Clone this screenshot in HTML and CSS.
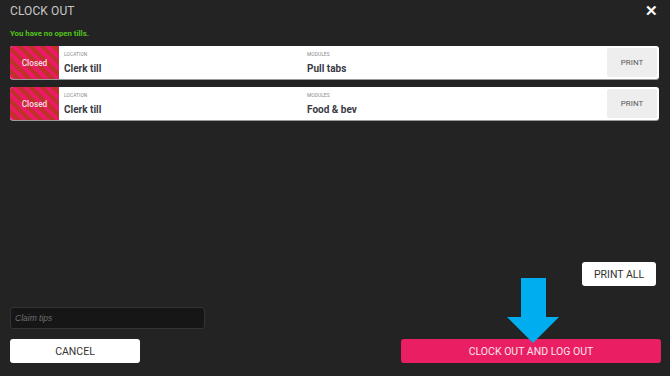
FILE: index.html
```html
<!DOCTYPE html>
<html>
<head>
<meta charset="utf-8">
<link rel="stylesheet" href="styles.css">
</head>
<body>
<div class="screen">
  <div class="header">
    <span class="title">CLOCK OUT</span>
    <span class="close">✕</span>
  </div>
  <div class="notice">You have no open tills.</div>
  <div class="tills">
    <div class="till">
      <div class="status">Closed</div>
      <div class="field loc">
        <div class="label">LOCATION</div>
        <div class="value">Clerk till</div>
      </div>
      <div class="field mod">
        <div class="label">MODULES</div>
        <div class="value">Pull tabs</div>
      </div>
      <button class="print">PRINT</button>
    </div>
    <div class="till">
      <div class="status">Closed</div>
      <div class="field loc">
        <div class="label">LOCATION</div>
        <div class="value">Clerk till</div>
      </div>
      <div class="field mod">
        <div class="label">MODULES</div>
        <div class="value">Food &amp; bev</div>
      </div>
      <button class="print">PRINT</button>
    </div>
  </div>
  <div class="bottom">
    <div class="printall-row"><button class="printall">PRINT ALL</button></div>
    <input class="tips" type="text" placeholder="Claim tips">
    <div class="actions">
      <button class="cancel">CANCEL</button>
      <button class="logout">CLOCK OUT AND LOG OUT</button>
    </div>
  </div>
  <svg class="arrow" width="52" height="65" viewBox="0 0 52 65">
    <rect x="14" y="0" width="25" height="40" fill="#00aeef"/>
    <polygon points="0,39 52,39 26,65" fill="#00aeef"/>
  </svg>
</div>
</body>
</html>
```

FILE: styles.css
```css
html, body {
  margin: 0;
  padding: 0;
  background: #232323;
  font-family: Roboto, "Liberation Sans", sans-serif;
}

.screen {
  position: relative;
  height: 376px;
  box-sizing: border-box;
  padding: 0 11px 13px 10px;
  display: flex;
  flex-direction: column;
}

.header {
  height: 22px;
  display: flex;
  align-items: center;
  justify-content: space-between;
}

.title {
  color: #c8c8c8;
  font-size: 12px;
  letter-spacing: 0.1px;
}

.close {
  color: #fff;
  font-size: 15px;
  font-weight: 700;
  margin-right: 1px;
  line-height: 1;
}

.notice {
  margin-top: 7px;
  line-height: 10px;
  font-size: 7.8px;
  font-weight: 700;
  color: #52c41a;
}

.tills {
  margin-top: 7px;
  display: flex;
  flex-direction: column;
  gap: 8px;
}

.till {
  height: 33px;
  background: #fff;
  border-radius: 3px;
  display: flex;
  align-items: stretch;
  overflow: hidden;
  box-shadow: 0 1px 0 #9a9a9a;
}

.status {
  width: 49px;
  flex: none;
  display: flex;
  align-items: center;
  justify-content: center;
  color: #f8dde3;
  font-size: 8.3px;
  font-weight: 500;
  background: repeating-linear-gradient(45deg, #ec1a66 0 4px, #bd3327 4px 8px);
}

.field {
  display: flex;
  flex-direction: column;
  padding-top: 6px;
  box-sizing: border-box;
}

.loc {
  width: 248px;
  padding-left: 5px;
}

.mod {
  flex: 1;
}

.label {
  font-size: 4.8px;
  color: #888;
  line-height: 6px;
  letter-spacing: 0.1px;
}

.value {
  margin-top: 5px;
  font-size: 10px;
  font-weight: 700;
  color: #3a3a44;
  line-height: 12px;
}

.print {
  width: 50px;
  margin: 2px 2px 2px 0;
  border: none;
  border-radius: 2px;
  background: #eeeeee;
  color: #5a5a5a;
  font-family: inherit;
  font-size: 8px;
  padding: 0;
}

.bottom {
  margin-top: auto;
  display: flex;
  flex-direction: column;
}

.printall-row {
  display: flex;
  justify-content: flex-end;
}

.printall {
  width: 74px;
  height: 24px;
  margin-right: 3px;
  border: none;
  border-radius: 3px;
  background: #fff;
  color: #333;
  font-family: inherit;
  font-size: 10.5px;
  padding: 0;
}

.tips {
  margin-top: 21px;
  width: 195px;
  height: 22px;
  box-sizing: border-box;
  background: #161616;
  border: 1px solid #333;
  border-radius: 3px;
  color: #ccc;
  font-family: "Liberation Sans", sans-serif;
  font-style: italic;
  font-size: 8.5px;
  padding: 0 4px;
  outline: none;
}

.tips::placeholder {
  color: #6f6f6f;
  font-style: italic;
}

.actions {
  margin-top: 10px;
  display: flex;
  justify-content: space-between;
}

.cancel {
  width: 130px;
  height: 24px;
  border: none;
  border-radius: 3px;
  background: #fff;
  color: #333;
  font-family: inherit;
  font-size: 10.5px;
  padding: 0;
}

.logout {
  width: 260px;
  height: 24px;
  margin-right: -2px;
  border: none;
  border-radius: 3px;
  background: #e91e63;
  color: #fbe3ea;
  font-family: inherit;
  font-size: 10.5px;
  padding: 0;
}

.arrow {
  position: absolute;
  left: 507px;
  top: 278px;
}
```
